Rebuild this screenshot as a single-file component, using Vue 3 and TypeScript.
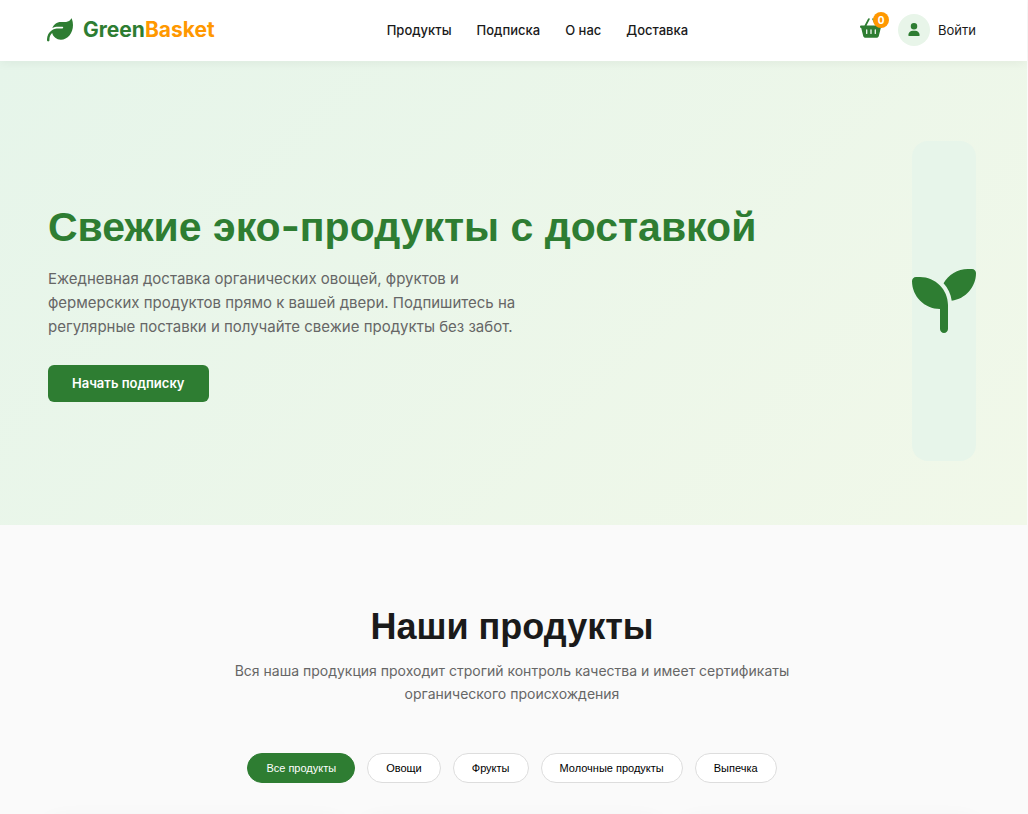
<script setup lang="ts">
import { ref } from 'vue'

const links: string[] = ['Продукты', 'Подписка', 'О нас', 'Доставка']
const categories: string[] = ['Все продукты', 'Овощи', 'Фрукты', 'Молочные продукты', 'Выпечка']
const active = ref<string>(categories[0])
const cartCount = ref<number>(0)
</script>

<template>
  <div class="page">
    <header class="header">
      <a class="logo" href="#">
        <svg class="logo-icon" viewBox="0 0 512 512" aria-hidden="true">
          <path d="M272 96c-78.6 0-145.1 51.5-167.7 122.5c33.6-17 71.5-26.5 111.7-26.5h88c8.8 0 16 7.2 16 16s-7.2 16-16 16H216c-16.6 0-32.7 1.9-48.2 5.4c-25.9 5.9-50 16.4-71.4 30.7C38.3 298.8 0 364.9 0 440v16c0 13.3 10.7 24 24 24s24-10.7 24-24V440c0-48.7 20.7-92.5 53.8-123.2C121.6 392.3 190.3 448 272 448l1 0c132.1-.7 239-130.9 239-291.4c0-42.6-7.5-83.1-21.1-119.6c-2.6-6.9-12.7-6.6-16.2-.1C455.9 72.1 418.7 96 376 96L272 96z" />
        </svg>
        <span>Green<span class="logo-accent">Basket</span></span>
      </a>
      <nav class="nav">
        <a v-for="link in links" :key="link" href="#">{{ link }}</a>
      </nav>
      <div class="actions">
        <button class="cart" type="button" aria-label="Корзина">
          <svg class="cart-icon" viewBox="0 0 576 512" aria-hidden="true">
            <path d="M253.3 35.1c6.1-11.8 1.5-26.3-10.2-32.4s-26.3-1.5-32.4 10.2L117.6 192H32c-17.7 0-32 14.3-32 32s14.3 32 32 32L83.9 463.5C91 492 116.6 512 146 512H430c29.4 0 55-20 62.1-48.5L544 256c17.7 0 32-14.3 32-32s-14.3-32-32-32H458.4L365.3 12.9C359.2 1.2 344.7-3.4 332.9 2.7s-16.3 20.6-10.2 32.4L404.3 192H171.7L253.3 35.1zM192 304v96c0 8.8-7.2 16-16 16s-16-7.2-16-16V304c0-8.8 7.2-16 16-16s16 7.2 16 16zm96-16c8.8 0 16 7.2 16 16v96c0 8.8-7.2 16-16 16s-16-7.2-16-16V304c0-8.8 7.2-16 16-16zm128 16v96c0 8.8-7.2 16-16 16s-16-7.2-16-16V304c0-8.8 7.2-16 16-16s16 7.2 16 16z" />
          </svg>
          <span class="badge">{{ cartCount }}</span>
        </button>
        <a class="login" href="#">
          <span class="avatar">
            <svg class="user-icon" viewBox="0 0 448 512" aria-hidden="true">
              <path d="M224 256A128 128 0 1 0 224 0a128 128 0 1 0 0 256zm-45.7 48C79.8 304 0 383.8 0 482.3C0 498.7 13.3 512 29.7 512H418.3c16.4 0 29.7-13.3 29.7-29.7C448 383.8 368.2 304 269.7 304H178.3z" />
            </svg>
          </span>
          <span>Войти</span>
        </a>
      </div>
    </header>

    <section class="hero">
      <div class="hero-text">
        <h1>Свежие эко<span class="hyphen">-</span>продукты с доставкой</h1>
        <p>Ежедневная доставка органических овощей, фруктов и фермерских продуктов прямо к вашей двери. Подпишитесь на регулярные поставки и получайте свежие продукты без забот.</p>
        <button class="cta" type="button">Начать подписку</button>
      </div>
      <div class="hero-art">
        <svg class="seedling" viewBox="0 0 512 512" aria-hidden="true">
          <path d="M512 32c0 113.6-84.6 207.5-194.2 222c-7.1-53.4-30.6-101.6-65.3-139.3C290.8 46.3 364 0 448 0h32c17.7 0 32 14.3 32 32zM0 96C0 78.3 14.3 64 32 64H64c123.7 0 224 100.3 224 224v32V480c0 17.7-14.3 32-32 32s-32-14.3-32-32V320C100.3 320 0 219.7 0 96z" />
        </svg>
      </div>
    </section>

    <section class="products">
      <h2>Наши продукты</h2>
      <p class="lead">Вся наша продукция проходит строгий контроль качества и имеет сертификаты органического происхождения</p>
      <div class="filters">
        <button
          v-for="category in categories"
          :key="category"
          type="button"
          class="filter"
          :class="{ active: category === active }"
          @click="active = category"
        >{{ category }}</button>
      </div>
      <div class="grid">
        <article v-for="n in 3" :key="n" class="card"></article>
      </div>
    </section>
  </div>
</template>

<style>
body {
  margin: 0;
  background: #fafafa;
}
</style>

<style scoped>
.page {
  height: 100vh;
  box-sizing: border-box;
  overflow-y: auto;
  scrollbar-width: none;
  font-family: Inter, "Liberation Sans", sans-serif;
  color: #1a1a1a;
  padding-right: 1px;
}

a {
  color: inherit;
  text-decoration: none;
}

button {
  border: 0;
  cursor: pointer;
}

svg {
  display: block;
  fill: #2e7d32;
}

.header {
  position: relative;
  z-index: 1;
  display: flex;
  align-items: center;
  justify-content: space-between;
  height: 61px;
  box-sizing: border-box;
  padding: 0 51px 2px 47px;
  background: #fff;
  box-shadow: 0 2px 10px rgba(0, 0, 0, 0.05);
}

.logo {
  display: flex;
  align-items: center;
  gap: 10px;
  font-size: 21px;
  font-weight: 700;
  color: #2e7d32;
}

.logo-icon {
  width: 26px;
  height: 26px;
}

.logo-accent {
  color: #ff9800;
}

.nav {
  display: flex;
  gap: 25px;
  font-size: 13px;
  font-weight: 500;
}

.actions {
  display: flex;
  align-items: center;
  gap: 16px;
  font-size: 13px;
}

.cart {
  position: relative;
  padding: 0 0 4px;
  background: none;
}

.cart-icon {
  width: 22px;
  height: 20px;
}

.badge {
  position: absolute;
  top: -6px;
  right: -7px;
  width: 16px;
  height: 16px;
  border-radius: 50%;
  background: #ff9800;
  color: #fff;
  font: 700 10px/16px Inter, sans-serif;
  text-align: center;
}

.login {
  display: flex;
  align-items: center;
  gap: 8px;
}

.avatar {
  display: flex;
  align-items: center;
  justify-content: center;
  width: 32px;
  height: 32px;
  border-radius: 50%;
  background: #e8f5e9;
}

.user-icon {
  width: 12px;
  height: 13px;
}

.hero {
  display: flex;
  align-items: center;
  justify-content: space-between;
  padding: 80px 51px 64px 48px;
  background: linear-gradient(135deg, #e6f5ea 0%, #f1f8e9 100%);
}

h1 {
  margin: 0 0 15px;
  font: 700 41px/50px "Liberation Sans", Arial, sans-serif;
  color: #2e7d32;
}

.hyphen {
  font-family: Inter, sans-serif;
}

.hero p {
  max-width: 480px;
  margin: 0 0 26px;
  font-size: 15px;
  line-height: 24px;
  color: #666;
}

.cta {
  padding: 0 24px;
  border-radius: 6px;
  background: #2e7d32;
  color: #fff;
  font: 600 13px/37px Inter, sans-serif;
}

.hero-art {
  display: flex;
  align-items: center;
  height: 320px;
  border-radius: 16px;
  background: #e7f5ea;
}

.seedling {
  width: 64px;
  height: 64px;
}

.products {
  padding: 80px 51px 64px 48px;
  background: #fafafa;
}

h2 {
  margin: 0 0 11px;
  font: 700 36px/43px "Liberation Sans", Arial, sans-serif;
  text-align: center;
}

.lead {
  max-width: 560px;
  margin: 0 auto 48px;
  font-size: 14px;
  line-height: 23px;
  text-align: center;
  color: #666;
}

.filters {
  display: flex;
  flex-wrap: wrap;
  justify-content: center;
  gap: 12px;
  margin-bottom: 38px;
}

.filter {
  padding: 0 18px;
  border: 1px solid #ddd;
  border-radius: 16px;
  background: #fff;
  color: #000;
  font: 400 11px/28px "Liberation Sans", Arial, sans-serif;
}

.filter.active {
  border-color: #2e7d32;
  background: #2e7d32;
  color: #fff;
}

.grid {
  display: grid;
  grid-template-columns: repeat(3, 1fr);
  gap: 24px;
}

.card {
  min-height: 320px;
  border-radius: 12px;
  background: #fff;
  box-shadow: 0 4px 24px rgba(0, 0, 0, 0.08);
}
</style>
